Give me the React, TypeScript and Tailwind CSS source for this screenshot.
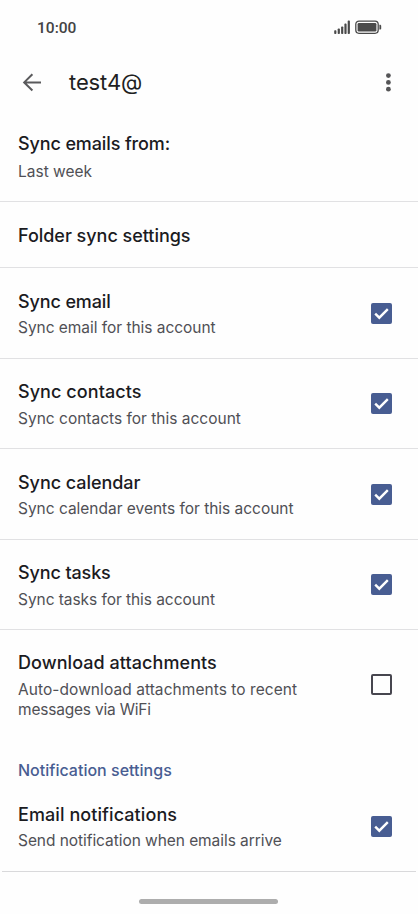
import type { ReactNode } from "react";

function StatusBar() {
  return (
    <div className="flex h-[54px] items-center justify-between pr-9 pl-[37px]">
      <span className="pt-px font-['Roboto',sans-serif] text-[15.5px] leading-5 font-medium tracking-[0.02px] text-[#434343]">
        10:00
      </span>
      <svg width="48" height="14" viewBox="0 0 48 14" className="text-[#4a4a4a]" fill="currentColor">
        <rect x="0.2" y="10.2" width="2.2" height="3.8" rx="0.8" />
        <rect x="3.7" y="8.4" width="2.2" height="5.6" rx="0.8" />
        <rect x="7.1" y="6.4" width="2.2" height="7.6" rx="0.8" />
        <rect x="10.4" y="3.6" width="2.2" height="10.4" rx="0.8" />
        <rect x="13.7" y="0.6" width="2.2" height="13.4" rx="0.8" />
        <rect x="21.8" y="1.1" width="22.4" height="12.2" rx="3.2" fill="none" stroke="currentColor" strokeWidth="1.3" />
        <rect x="23.6" y="2.9" width="18.8" height="8.6" rx="1.3" />
        <path d="M45.4 4.8h.6c.7 0 1.2.6 1.2 1.2v2.4c0 .7-.5 1.2-1.2 1.2h-.6z" />
      </svg>
    </div>
  );
}

function Header() {
  return (
    <header className="flex h-14 items-center pr-[25px] pl-5">
      <button aria-label="Back" className="flex">
        <svg width="24" height="24" viewBox="0 0 24 24" fill="none" stroke="#5a5a5c" strokeWidth="2">
          <path d="M21 12.4H4.5M12.4 4.3l-8.2 8.1 8.2 8.1" />
        </svg>
      </button>
      <h1 className="ml-[25px] flex-1 text-[22px] leading-7 tracking-[-0.1px] text-[#1f1f22]">test4@</h1>
      <button aria-label="More options" className="flex">
        <svg width="9" height="20" viewBox="0 0 9 20" fill="#555557">
          <circle cx="4.4" cy="3.6" r="2.4" />
          <circle cx="4.4" cy="10.4" r="2.4" />
          <circle cx="4.4" cy="17.2" r="2.4" />
        </svg>
      </button>
    </header>
  );
}

function Checkbox({ checked }: { checked: boolean }) {
  return checked ? (
    <span role="checkbox" aria-checked="true" className="size-[21px] shrink-0 rounded-[2px] bg-[#485d92]">
      <svg width="21" height="21" viewBox="0 0 21 21" fill="none" stroke="#fff" strokeWidth="2.4">
        <path d="M4.2 10.6l4.1 4.1 8.5-8.5" />
      </svg>
    </span>
  ) : (
    <span
      role="checkbox"
      aria-checked="false"
      className="size-[21px] shrink-0 rounded-[2px] border-2 border-[#47464f]"
    />
  );
}

function Setting({
  title,
  titleClass = "",
  className,
  checked,
  children,
}: {
  title: string;
  titleClass?: string;
  className: string;
  checked?: boolean;
  children?: ReactNode;
}) {
  return (
    <div className={`flex items-center justify-between border-[#e1e1e3] pr-[26px] pl-[18px] ${className}`}>
      <div className="pt-[1.5px]">
        <p className={`text-[18px] leading-6 font-medium whitespace-nowrap text-[#1b1b1f] ${titleClass}`}>{title}</p>
        {children && (
          <div className="mt-[4.5px] text-[15.5px] leading-5 whitespace-nowrap text-[#505055]">{children}</div>
        )}
      </div>
      {checked !== undefined && <Checkbox checked={checked} />}
    </div>
  );
}

export default function App() {
  return (
    <div className="flex h-[914px] w-[418px] flex-col overflow-hidden bg-[#fefefe] font-['Inter',sans-serif]">
      <StatusBar />
      <Header />
      <main>
        <Setting title="Sync emails from:" titleClass="tracking-[-0.12px]" className="h-[92px] border-b pt-px">
          <p className="pt-px">Last week</p>
        </Setting>
        <Setting title="Folder sync settings" titleClass="tracking-[-0.03px]" className="h-[66px] border-b pt-px" />
        <Setting title="Sync email" titleClass="tracking-[-0.12px]" className="h-[91px] border-b" checked>
          <p className="tracking-[-0.04px]">Sync email for this account</p>
        </Setting>
        <Setting title="Sync contacts" titleClass="tracking-[0.07px]" className="h-[90px] border-b" checked>
          <p>Sync contacts for this account</p>
        </Setting>
        <Setting title="Sync calendar" titleClass="tracking-[-0.05px]" className="h-[91px] border-b" checked>
          <p className="tracking-[-0.02px]">Sync calendar events for this account</p>
        </Setting>
        <Setting title="Sync tasks" titleClass="tracking-[-0.12px]" className="h-[90px] border-b" checked>
          <p className="tracking-[-0.06px]">Sync tasks for this account</p>
        </Setting>
        <Setting title="Download attachments" titleClass="tracking-[0.06px]" className="h-[109px]" checked={false}>
          <p className="tracking-[0.06px]">Auto-download attachments to recent</p>
          <p className="tracking-[-0.2px]">messages via WiFi</p>
        </Setting>
        <h2 className="mt-[21px] pl-[18px] text-[16px] leading-5 font-medium tracking-[0.01px] text-[#485d92]">
          Notification settings
        </h2>
        <div className="px-0.5">
          <Setting
            title="Email notifications"
            titleClass="tracking-[0.08px]"
            className="-mx-0.5 h-[91px] pt-px"
            checked
          >
            <p className="tracking-[-0.06px]">Send notification when emails arrive</p>
          </Setting>
          <div className="h-px bg-[#d9d9db]" />
        </div>
      </main>
      <div className="mt-[27px] ml-[139px] h-[5px] w-[139px] shrink-0 rounded-full bg-[#adadad]" />
    </div>
  );
}
